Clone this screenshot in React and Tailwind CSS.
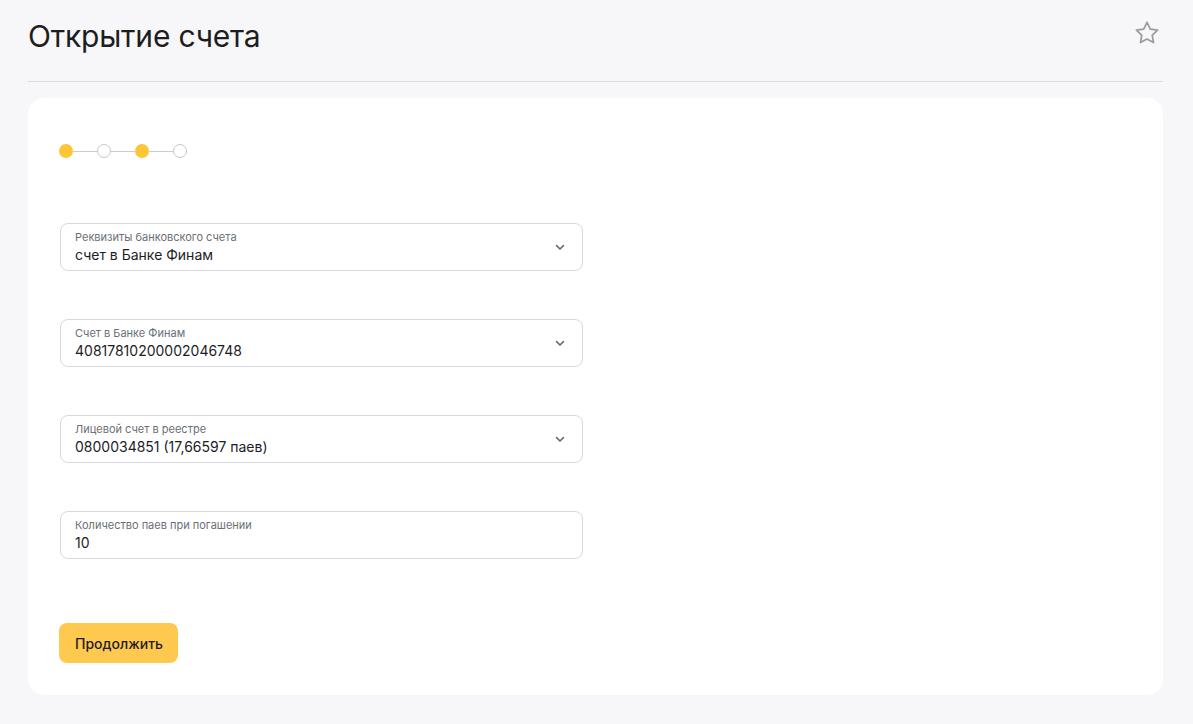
import React from "react";

const fields = [
  { label: "Реквизиты банковского счета", value: "счет в Банке Финам", select: true },
  { label: "Счет в Банке Финам", value: "40817810200002046748", select: true },
  { label: "Лицевой счет в реестре", value: "0800034851 (17,66597 паев)", select: true },
  { label: "Количество паев при погашении", value: "10", select: false },
];

function Chevron() {
  return (
    <svg width="12" height="12" viewBox="0 0 12 12" fill="none" className="text-[#5b5f66]">
      <path d="M2.5 4.5 6 8l3.5-3.5" stroke="currentColor" strokeWidth="1.5" strokeLinecap="round" strokeLinejoin="round" />
    </svg>
  );
}

function Steps() {
  const done = [true, false, true, false];
  return (
    <div className="flex items-center">
      {done.map((d, i) => (
        <React.Fragment key={i}>
          {i > 0 && <div className="h-px w-[24px] bg-[#c9ccd1]" />}
          <div
            className={
              d
                ? "h-[14px] w-[14px] rounded-full bg-[#fcc636]"
                : "h-[14px] w-[14px] rounded-full border border-[#c4c7cc] bg-white"
            }
          />
        </React.Fragment>
      ))}
    </div>
  );
}

function Field({ label, value, select }) {
  return (
    <div className="flex h-[48px] w-[523px] items-center rounded-[8px] border border-[#d7d9dd] bg-white pl-[14px] pr-[16px]">
      <div className="flex flex-1 flex-col">
        <span className="text-[11px] leading-[14px] text-[#6b6f76]">{label}</span>
        <span className="mt-[2px] text-[14px] leading-[18px] text-[#1c1d1f]">{value}</span>
      </div>
      {select && <Chevron />}
    </div>
  );
}

export default function App() {
  return (
    <div className="min-h-[724px] bg-[#f7f7f9] pl-[28px] pr-[30px] pt-[16px] font-['Inter',sans-serif] text-[#1c1d1f]">
      <div className="flex items-center justify-between pb-[25px]">
        <h1 className="text-[30px] leading-[40px] font-normal tracking-[-0.2px]">Открытие счета</h1>
        <svg width="28" height="28" viewBox="0 0 24 24" fill="none" className="mr-[2px] -mt-[6px] text-[#9a9ca1]">
          <path
            d="M12 2.8l2.8 5.8 6.3.9-4.6 4.4 1.1 6.3L12 17.2l-5.6 3 1.1-6.3-4.6-4.4 6.3-.9z"
            stroke="currentColor"
            strokeWidth="1.5"
            strokeLinejoin="round"
          />
        </svg>
      </div>
      <div className="h-px bg-[#dcdde0]" />
      <div className="mt-[16px] rounded-[16px] bg-white pl-[31px] pr-[32px] pt-[46px] pb-[32px]">
        <Steps />
        <div className="mt-[65px] flex flex-col gap-[48px] pl-[1px]">
          {fields.map((f) => (
            <Field key={f.label} {...f} />
          ))}
        </div>
        <button className="mt-[64px] h-[40px] rounded-[8px] bg-[#ffc94f] pl-[16px] pr-[15px] text-[14px] font-medium text-[#1c1d1f]">
          Продолжить
        </button>
      </div>
    </div>
  );
}
